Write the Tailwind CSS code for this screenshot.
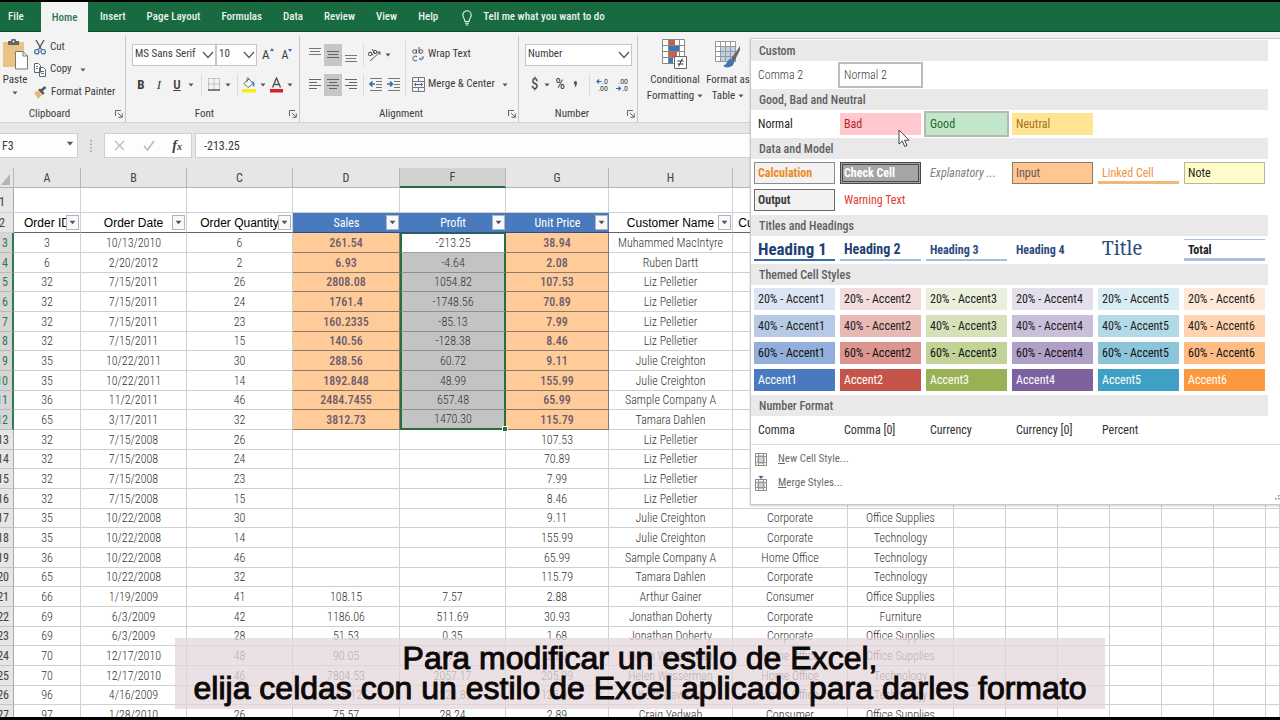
<!DOCTYPE html>
<html lang="en">
<head>
<meta charset="utf-8">
<meta name="viewport" content="width=device-width, initial-scale=1">
<title>Excel - Cell Styles</title>
<script src="https://cdn.jsdelivr.net/npm/@tailwindcss/browser@4"></script>
</head>
<body class="relative flex h-screen flex-col overflow-hidden border-t-2 border-b-3 border-black bg-white font-['Roboto_Condensed','Liberation_Sans',sans-serif] text-[11px] text-[#3b3b3b]">

<svg class="hidden" aria-hidden="true">
  <symbol id="caret" viewBox="0 0 6 4"><path d="M0.5 0.5h5L3 3.5z" fill="#555"/></symbol>
  <symbol id="chev" viewBox="0 0 12 8"><path d="M1 1l5 5.5L11 1" fill="none" stroke="#555" stroke-width="1.2"/></symbol>
  <symbol id="launch" viewBox="0 0 8 8"><path d="M.5 6V.5H6M3 3l4 4M7.3 3.5v3.8H3.5" fill="none" stroke="#666"/></symbol>
</svg>

<!-- Tabs -->
<nav class="flex h-[30px] shrink-0 items-stretch border-b border-[#0c4a27] bg-[#186a41] font-medium text-[#e8f3ec] [&>a]:pt-[2px]">
  <a href="#" class="flex w-[41px] items-center pl-2">File</a>
  <a href="#" class="-mb-px flex w-[47px] items-center justify-center bg-[#f3f3f3] font-medium text-[#2c7a51]">Home</a>
  <a href="#" class="ml-3 flex items-center">Insert</a>
  <a href="#" class="ml-[21px] flex items-center">Page Layout</a>
  <a href="#" class="ml-[21px] flex items-center">Formulas</a>
  <a href="#" class="ml-[21px] flex items-center">Data</a>
  <a href="#" class="ml-[21px] flex items-center">Review</a>
  <a href="#" class="ml-[21px] flex items-center">View</a>
  <a href="#" class="ml-[21px] flex items-center">Help</a>
  <a href="#" class="ml-6 flex items-center gap-[11px]">
    <svg width="10" height="16" viewBox="0 0 10 16" fill="none" stroke="#e8f3ec" stroke-width="1.1"><path d="M3 11.5C3 9 .8 8 .8 5a4.2 4.2 0 018.4 0C9.200 8 7 9 7 11.500zM3 13.300h4M3.700 15h2.600"/></svg>
    Tell me what you want to do</a>
</nav>

<!-- Ribbon -->
<section class="flex h-[91px] shrink-0 border-b border-[#d4d4d4] bg-[#f3f3f3] pt-1">
  <!-- Clipboard -->
  <div class="flex w-[126px] shrink-0 flex-col border-r border-[#c8c8c8]">
    <div class="flex grow">
      <button class="flex w-[34px] flex-col items-center pr-1 pt-[3px]">
        <svg width="25" height="31" viewBox="0 0 25 31"><path d="M0 3h21v25H0z" fill="#eac282"/><path d="M5 2h3a2.500 2.500 0 015 0h3v4H5z" fill="#636363"/><circle cx="10.500" cy="2.500" r="1" fill="#f3f3f3"/><path d="M12.500 12.500h7.500l4.500 4.500v13h-12z" fill="#fff" stroke="#777"/><path d="M20 12.500v4.500h4.500" fill="none" stroke="#777"/></svg>
        <span class="mt-[3px] leading-[14px]">Paste</span>
        <svg class="mt-1" width="6" height="4"><use href="#caret"/></svg>
      </button>
      <div class="flex flex-col">
        <button class="flex h-[22px] items-center gap-1"><svg width="12" height="15" viewBox="0 0 12 15" fill="none"><path d="M2 0l5.500 9.500M10 0L4.500 9.500" stroke="#555" stroke-width="1.300"/><circle cx="2.800" cy="11.700" r="2.200" stroke="#3d6ea8" stroke-width="1.200"/><circle cx="9.200" cy="11.700" r="2.200" stroke="#3d6ea8" stroke-width="1.200"/></svg>Cut</button>
        <button class="flex h-[23px] items-center gap-1"><svg width="12" height="14" viewBox="0 0 12 14" fill="#fff" stroke="#666"><path d="M.5.5h4l2 2v7h-6zM5.500 4.500h4l2 2v7h-6z"/><path d="M2 3.500h2M2 5.500h2M7 8.500h3M7 10.500h3" stroke="#4472a8"/></svg>Copy<svg class="ml-1" width="6" height="4"><use href="#caret"/></svg></button>
        <button class="flex h-[22px] items-center gap-1"><svg width="13" height="13" viewBox="0 0 13 13"><path d="M0 6l4 7 4-4-4-4z" fill="#e8b873"/><path d="M4 4l5 5 1.500-2L6 2.500z" fill="#555"/><path d="M7.500 4.500l4-3.500" stroke="#555" stroke-width="2.600"/></svg>Format Painter</button>
      </div>
    </div>
    <div class="flex h-4 items-center"><span class="grow pr-4 text-center">Clipboard</span><svg class="mr-[2px]" width="8" height="8"><use href="#launch"/></svg></div>
  </div>
  <!-- Font -->
  <div class="flex w-[174px] shrink-0 flex-col border-r border-[#c8c8c8] pl-[6px]">
    <div class="flex h-[37px] items-center">
      <label class="relative flex"><select aria-label="Font name" class="h-[22px] w-[84px] appearance-none border border-[#c6c6c6] bg-white pl-[2px] text-[11px]"><option>MS Sans Serif</option></select><svg class="pointer-events-none absolute right-[2px] top-[7px]" width="12" height="8"><use href="#chev"/></svg></label>
      <label class="relative flex"><select aria-label="Font size" class="h-[22px] w-[41px] appearance-none border border-[#c6c6c6] bg-white pl-[2px] text-[11px]"><option>10</option></select><svg class="pointer-events-none absolute right-[2px] top-[7px]" width="12" height="8"><use href="#chev"/></svg></label>
      <button aria-label="Increase font size" class="ml-[5px] flex items-start text-[13px] leading-none">A<svg width="4" height="4" viewBox="0 0 4 4"><path d="M0 3h4L2 0z" fill="#2f6db5"/></svg></button>
      <button aria-label="Decrease font size" class="ml-2 flex items-start text-[12px] leading-none">A<svg width="4" height="4" viewBox="0 0 4 4"><path d="M0 0h4L2 3z" fill="#2f6db5"/></svg></button>
    </div>
    <div class="flex h-[23px] items-center text-[13px]">
      <button class="w-[18px] font-bold">B</button>
      <button class="w-[18px] font-['Liberation_Serif',serif] italic">I</button>
      <button class="w-[18px] font-medium underline">U</button>
      <svg class="ml-[2px] mr-[7px]" width="6" height="4"><use href="#caret"/></svg>
      <span class="mr-[6px] h-[22px] w-px bg-[#dcdcdc]"></span>
      <svg width="12" height="13" viewBox="0 0 12 13" fill="none"><path d="M.5.5h11v11M.5.5v11M6 .5v11M.5 6h11" stroke="#999" stroke-dasharray="1 1"/><path d="M0 12h12" stroke="#555" stroke-width="1.500"/></svg>
      <svg class="ml-[5px] mr-[6px]" width="6" height="4"><use href="#caret"/></svg>
      <span class="mr-1 h-[22px] w-px bg-[#dcdcdc]"></span>
      <svg width="14" height="16" viewBox="0 0 14 16"><path d="M2 6.500L7 2l4 4.500-5 4z" fill="#fff" stroke="#666"/><path d="M5 5V1.500c0-1 2-1 2 0" fill="none" stroke="#666"/><path d="M10.500 4c2 1 2.500 3 1.500 6-1.500-1-1.500-3-1.500-6z" fill="#3c76b8"/><path d="M0 12h14v3.500H0z" fill="#f7ec22"/></svg>
      <svg class="ml-1 mr-1" width="6" height="4"><use href="#caret"/></svg>
      <svg width="13" height="16" viewBox="0 0 13 16"><path d="M2.500 10.500L6.500 1l4 9.500M4 7.500h5" fill="none" stroke="#555" stroke-width="1.400"/><path d="M0 12h13v3.500H0z" fill="#dc1f1f"/></svg>
      <svg class="ml-1" width="6" height="4"><use href="#caret"/></svg>
    </div>
    <div class="mt-auto flex h-4 items-center"><span class="grow text-center pr-3">Font</span><svg class="mr-[2px]" width="8" height="8"><use href="#launch"/></svg></div>
  </div>
  <!-- Alignment -->
  <div class="flex w-[219px] shrink-0 flex-col border-r border-[#c8c8c8] pl-[6px]">
    <div class="flex">
      <div class="flex flex-col">
        <div class="flex h-[37px] items-center">
          <button aria-label="Top align" class="flex h-[22px] w-[18px] items-center justify-center"><svg width="12" height="16" viewBox="0 0 12 16" stroke="#777"><path d="M0 1.500h12M1 4.500h10M0 7.500h12"/></svg></button>
          <button aria-label="Middle align" class="flex h-[22px] w-[18px] items-center justify-center bg-[#c6c6c6]"><svg width="12" height="16" viewBox="0 0 12 16" stroke="#666"><path d="M0 4.500h12M1 7.500h10M0 10.500h12"/></svg></button>
          <button aria-label="Bottom align" class="flex h-[22px] w-[18px] items-center justify-center"><svg width="12" height="16" viewBox="0 0 12 16" stroke="#777"><path d="M0 8.500h12M1 11.500h10M0 14.500h12"/></svg></button>
          <span class="mx-[3px] h-[22px] w-px bg-[#dcdcdc]"></span>
          <button aria-label="Orientation" class="flex items-center gap-1"><svg width="14" height="14" viewBox="0 0 14 14" fill="none" stroke="#555"><circle cx="3" cy="6" r="1.700"/><path d="M3.500 3.500l2.500 4M5 1l3.500 5"/><circle cx="8" cy="4" r="1.700"/><path d="M3 13L13 4M10 4h3v3"/></svg><svg width="6" height="4"><use href="#caret"/></svg></button>
        </div>
        <div class="flex h-[23px] items-center">
          <button aria-label="Align left" class="flex h-[22px] w-[18px] items-center justify-center"><svg width="12" height="12" viewBox="0 0 12 12" stroke="#666"><path d="M0 .5h12M0 3.500h8M0 6.500h12M0 9.500h8"/></svg></button>
          <button aria-label="Center" class="flex h-[22px] w-[18px] items-center justify-center bg-[#c6c6c6]"><svg width="12" height="12" viewBox="0 0 12 12" stroke="#666"><path d="M0 .5h12M2 3.500h8M0 6.500h12M2 9.500h8"/></svg></button>
          <button aria-label="Align right" class="flex h-[22px] w-[18px] items-center justify-center"><svg width="12" height="12" viewBox="0 0 12 12" stroke="#666"><path d="M0 .5h12M4 3.500h8M0 6.500h12M4 9.500h8"/></svg></button>
          <span class="mx-[3px] h-[22px] w-px bg-[#dcdcdc]"></span>
          <button aria-label="Decrease indent" class="ml-[2px]"><svg width="14" height="13" viewBox="0 0 14 13" fill="none"><path d="M1 .5h12M7 3.500h6M7 6.500h6M7 9.500h6M1 12.500h12" stroke="#777"/><path d="M6 6H1.500M3.500 3.500L1 6l2.500 2.500" stroke="#2f6db5" stroke-width="1.600"/></svg></button>
          <button aria-label="Increase indent" class="ml-1"><svg width="14" height="13" viewBox="0 0 14 13" fill="none"><path d="M1 .5h12M7 3.500h6M7 6.500h6M7 9.500h6M1 12.500h12" stroke="#777"/><path d="M0 6h5M3 3.500L5.500 6 3 8.500" stroke="#2f6db5" stroke-width="1.600"/></svg></button>
        </div>
      </div>
      <div class="ml-1 mt-[5px] flex h-[55px] flex-col justify-between border-l border-[#dcdcdc] pl-[6px]">
        <button class="flex h-[27px] items-center gap-1"><svg width="12" height="15" viewBox="0 0 12 15" fill="none" stroke="#555"><circle cx="2.500" cy="4.500" r="1.800"/><path d="M4.500 2.500v4M7 0v6.500"/><circle cx="9" cy="4.500" r="1.800"/><path d="M5 9.500c-3-1-4 0-4 2s1 3 4 2"/><path d="M11 9v3H7.500M9 10.500L7.500 12 9 13.500" stroke="#2f6db5"/></svg>Wrap Text</button>
        <button class="flex h-[23px] items-center gap-[3px]"><svg width="13" height="15" viewBox="0 0 13 15" fill="none" stroke="#777"><path d="M.5.5h12v14H.5zM.5 4.500h12M.5 10.500h12M6.500.5v4M6.500 10.500v4"/><path d="M2.500 7.500h8M4 6L2.500 7.500 4 9M9 6l1.500 1.500L9 9" stroke="#2f6db5"/></svg><span>Merge &amp; Center</span><svg class="ml-1" width="6" height="4"><use href="#caret"/></svg></button>
      </div>
    </div>
    <div class="mt-auto flex h-4 items-center"><span class="grow pr-3 text-center">Alignment</span><svg class="mr-[2px]" width="8" height="8"><use href="#launch"/></svg></div>
  </div>
  <!-- Number -->
  <div class="flex w-[119px] shrink-0 flex-col border-r border-[#c8c8c8] pl-[6px]">
    <div class="flex h-[37px] items-center">
      <label class="relative flex"><select aria-label="Number format" class="h-[22px] w-[107px] appearance-none border border-[#c6c6c6] bg-white pl-[2px] text-[11px]"><option>Number</option></select><svg class="pointer-events-none absolute right-[2px] top-[7px]" width="12" height="8"><use href="#chev"/></svg></label>
    </div>
    <div class="flex h-[23px] items-center text-[15px] leading-none">
      <button class="ml-[6px]">$</button>
      <svg class="ml-[6px] mr-[5px]" width="6" height="4"><use href="#caret"/></svg>
      <button>%</button>
      <button class="ml-2 w-2" aria-label="Comma style"><svg width="5" height="8" viewBox="0 0 5 8"><path d="M1 1.500a1.500 1.500 0 013 0c0 2.500-1 4-2.500 5.500 1-2 .5-3 0-3.500S1 2.500 1 1.500z" fill="#555"/></svg></button>
      <span class="ml-2 mr-[6px] h-[22px] w-px bg-[#dcdcdc]"></span>
      <button aria-label="Increase decimal" class="flex flex-col items-end text-[8px] leading-[7px]"><span class="flex items-center"><svg width="6" height="5" viewBox="0 0 6 5"><path d="M5.500 2.500H1M3 .5L1 2.500l2 2" fill="none" stroke="#2f6db5" stroke-width="1.200"/></svg>.0</span><span>.00</span></button>
      <button aria-label="Decrease decimal" class="ml-2 flex flex-col items-end text-[8px] leading-[7px]"><span>.00</span><span class="flex items-center"><svg width="6" height="5" viewBox="0 0 6 5"><path d="M0 2.500h4.500M2.500 .5l2 2-2 2" fill="none" stroke="#2f6db5" stroke-width="1.200"/></svg>.0</span></button>
    </div>
    <div class="mt-auto flex h-4 items-center"><span class="grow text-center pr-2">Number</span><svg class="mr-[2px]" width="8" height="8"><use href="#launch"/></svg></div>
  </div>
  <!-- Styles -->
  <div class="flex items-start pt-[3px]">
    <button class="flex w-[74px] flex-col items-center leading-4">
      <svg width="26" height="31" viewBox="0 0 26 31"><path d="M1 1h22v24H1z" fill="#fff"/><path d="M7 1h6v6H7zM7 13h8v6H7z" fill="#c9603f"/><path d="M7 7h10v6H7z" fill="#3f74b8"/><path d="M7 19h4v6H7z" fill="#3f74b8"/><path d="M.5.5h22v24H.5zM.5 6.500h22M.5 12.500h22M.5 18.500h22M6.500.5v24M17.500.5v24" fill="none" stroke="#888"/><path d="M12.500 17.500h12v12h-12z" fill="#fff" stroke="#666"/><path d="M15.500 22h6M15.500 25h6M20.500 19.500l-4 8" stroke="#333" fill="none"/></svg>
      <span class="mt-[2px]">Conditional</span><span class="flex items-center gap-[3px]">Formatting<svg width="6" height="4"><use href="#caret"/></svg></span>
    </button>
    <button class="flex w-8 flex-col items-center whitespace-nowrap leading-4">
      <svg width="26" height="31" viewBox="0 0 26 31"><path d="M1 3h20v20H1z" fill="#fff"/><path d="M6 8h15v15H6z" fill="#bdd1ea"/><path d="M.5 2.500h20v20H.5zM.5 7.500h20M.5 12.500h20M.5 17.500h20M5.500 2.500v20M10.500 2.500v20M15.500 2.500v20" fill="none" stroke="#999"/><path d="M25 7l-9 13 3 3 6-12z" fill="#666"/><path d="M16 20c-4 0-3 5-8 7 4 3 11 1 11-4z" fill="#3f74b8"/></svg>
      <span class="mt-[2px]">Format as</span><span class="flex items-center gap-[3px]">Table<svg width="6" height="4"><use href="#caret"/></svg></span>
    </button>
  </div>
</section>

<!-- Formula bar -->
<section class="flex h-[45px] shrink-0 items-center bg-[#e6e6e6] text-[12px]">
  <div class="flex h-[25px] w-[78px] items-center border border-l-0 border-[#d0d0d0] bg-[#fdfdfd]">
    <input aria-label="Name box" value="F3" class="w-[66px] bg-transparent pl-[2px] outline-none">
    <svg class="mb-1" width="8" height="5"><use href="#caret"/></svg>
  </div>
  <svg class="mx-[11px]" width="4" height="12" viewBox="0 0 4 12"><path d="M2 0v12" stroke="#999" stroke-width="1.500" stroke-dasharray="1.500 2"/></svg>
  <div class="flex h-[25px] w-[88px] items-center justify-between border border-[#d0d0d0] bg-[#fdfdfd] px-[9px]">
    <button aria-label="Cancel"><svg width="11" height="11" viewBox="0 0 11 11"><path d="M1 1l9 9M10 1l-9 9" stroke="#bbb" stroke-width="1.300"/></svg></button>
    <button aria-label="Enter"><svg width="12" height="11" viewBox="0 0 12 11"><path d="M1 6l3.500 4L11 1" fill="none" stroke="#bbb" stroke-width="1.600"/></svg></button>
    <button class="font-['Liberation_Serif',serif] text-[14px] font-bold italic leading-none" aria-label="Insert function">f<span class="text-[10px]">x</span></button>
  </div>
  <input aria-label="Formula" value="-213.25" class="ml-[3px] h-[25px] min-w-0 grow border border-[#d0d0d0] bg-[#fdfdfd] pl-2 outline-none">
</section>

<!-- Sheet -->
<main class="min-h-0 grow overflow-hidden">
  <table class="w-full table-fixed border-separate border-spacing-0 text-center text-[12px] leading-none">
    <colgroup>
      <col class="w-[14px]"><col class="w-[67px]"><col class="w-[106px]"><col class="w-[106px]"><col class="w-[107px]"><col class="w-[106px]"><col class="w-[103px]"><col class="w-[124px]"><col class="w-[115px]"><col class="w-[106px]"><col class="w-[52px]"><col class="w-[52px]"><col class="w-[52px]"><col class="w-[52px]"><col class="w-[52px]"><col class="w-[52px]"><col>
    </colgroup>
    <thead id="head"></thead>
    <tbody id="rows" class="font-light text-[#333] [&>tr]:h-5 [&>tr:nth-child(3n)]:h-[19px]"></tbody>
  </table>
</main>

<!-- Cell styles gallery -->
<aside class="absolute top-9 right-0 flex h-[467px] w-[530px] flex-col border border-r-0 border-[#c9c9c9] bg-white pt-px text-[12px] shadow-[0_1px_2px_rgba(0,0,0,0.2)]">
  <div id="gallery"></div>
  <div class="flex flex-col border-t border-[#dedede] pt-[2px] text-[11px] text-[#6b6b6b]">
    <button class="flex h-6 items-center gap-[11px] pl-1"><svg width="12" height="13" viewBox="0 0 12 13" fill="none" stroke="#888"><path d="M.5.5h11v12H.5z"/><path d="M3 3h6v7H3z" fill="#c9d2e6"/><path d="M.5 3.500h11M.5 9.500h11M3.500.5v12M8.500.5v12" stroke="#999"/></svg><span><u>N</u>ew Cell Style...</span></button>
    <button class="flex h-6 items-center gap-[11px] pl-1"><svg width="12" height="15" viewBox="0 0 12 15" fill="none" stroke="#888"><path d="M.5 3.500h11v11H.5z"/><path d="M3 6h6v6H3z" fill="#c9d2e6"/><path d="M.5 6.500h11M.5 11.500h11M3.500 3.500v11M8.500 3.500v11" stroke="#999"/><path d="M3.500 0h5L6 3z" fill="#3a5f95" stroke="none"/></svg><span><u>M</u>erge Styles...</span></button>
  </div>
  <svg class="mt-auto ml-auto mb-1" width="5" height="5" viewBox="0 0 5 5" fill="#888"><path d="M3 0h1.500v1.500H3zM0 3h1.500v1.500H0zM3 3h1.500v1.500H3z"/></svg>
</aside>

<!-- Mouse pointer -->
<svg class="absolute top-[127px] left-[898px]" width="12" height="19" viewBox="0 0 12 19"><path d="M1 1v14l3.300-3 2.400 5.500 2.300-1-2.400-5.300H11z" fill="#fff" stroke="#444"/></svg>

<!-- Subtitle -->
<div class="absolute bottom-2 left-1/2 w-[930px] -translate-x-1/2 bg-[#e4d6d9]/75 pt-[5px] pb-[6px] text-center font-['Liberation_Sans',sans-serif] text-[32px] leading-[30px] whitespace-nowrap text-[#0c0808] [-webkit-text-stroke:1px_#0c0808]">
  <p>Para modificar un estilo de Excel,</p>
  <p>elija celdas con un estilo de Excel aplicado para darles formato</p>
</div>

<script>
const filterBtn = '<button aria-label="Filter" class="absolute right-px bottom-[2px] flex h-[15px] w-[13px] items-center justify-center border border-[#aeb4c0] bg-[#f6f8fc]"><svg width="7" height="5"><use href="#caret"/></svg></button>';
const letters = ['A', 'B', 'C', 'D', 'F', 'G', 'H', 'I', 'J', '', '', '', '', '', '', ''];
const titles = ['Order ID', 'Order Date', 'Order Quantity', 'Sales', 'Profit', 'Unit Price', 'Customer Name', 'Customer Segment', 'Product Category', '', '', '', '', '', '', ''];

let head = '<tr class="h-5 bg-[#e6e6e6] text-[#444]"><th class="border-r border-b border-[#b5b5b5] p-0"><svg class="ml-px mt-1" width="9" height="11" viewBox="0 0 9 11"><path d="M9 0v11H0z" fill="#b4b4b4"/></svg></th>';
letters.forEach((l, i) => {
  head += i === 4
    ? '<th class="border-r border-r-[#b5b5b5] border-b-2 border-b-[#2a6b3f] bg-[#d2d2d2] p-0 font-normal">' + l + '</th>'
    : '<th class="border-r border-b border-[#b5b5b5] p-0 font-normal">' + l + '</th>';
});
head += '</tr><tr class="h-[25px]"><th class="border-r border-b border-r-[#a8a8a8] border-b-[#d0d0d0] bg-[#e6e6e6] p-0 align-bottom font-normal"><div class="flex justify-end pr-[8px] pb-1">1</div></th>';
for (let i = 0; i < 16; i++) head += '<td class="border-r border-b border-[#d0d0d0] p-0"></td>';
head += '</tr><tr class="h-5 text-black"><th class="border-r border-b border-r-[#a8a8a8] border-b-[#d0d0d0] bg-[#e6e6e6] p-0 font-normal text-[#444]"><div class="flex justify-end pr-[8px]">2</div></th>';
titles.forEach((t, i) => {
  if (!t) { head += '<td class="border-r border-b border-[#d0d0d0] p-0"></td>'; return; }
  head += (i > 2 && i < 6)
    ? '<th class="relative overflow-hidden border-b border-[#2c4f86] bg-[#487abd] p-0 text-[12px] font-normal whitespace-nowrap text-white">' + t + filterBtn + '</th>'
    : '<th class="relative overflow-hidden border-r border-b border-r-[#d0d0d0] border-b-[#666] p-0 font-[\'Liberation_Sans\',sans-serif] text-[12px] font-normal whitespace-nowrap">' + t + filterBtn + '</th>';
});
head += '</tr>';
document.getElementById('head').innerHTML = head;

const data = `3|10/13/2010|6|261.54|-213.25|38.94|Muhammed MacIntyre||
6|2/20/2012|2|6.93|-4.64|2.08|Ruben Dartt||
32|7/15/2011|26|2808.08|1054.82|107.53|Liz Pelletier||
32|7/15/2011|24|1761.4|-1748.56|70.89|Liz Pelletier||
32|7/15/2011|23|160.2335|-85.13|7.99|Liz Pelletier||
32|7/15/2011|15|140.56|-128.38|8.46|Liz Pelletier||
35|10/22/2011|30|288.56|60.72|9.11|Julie Creighton||
35|10/22/2011|14|1892.848|48.99|155.99|Julie Creighton||
36|11/2/2011|46|2484.7455|657.48|65.99|Sample Company A||
65|3/17/2011|32|3812.73|1470.30|115.79|Tamara Dahlen||
32|7/15/2008|26|||107.53|Liz Pelletier||
32|7/15/2008|24|||70.89|Liz Pelletier||
32|7/15/2008|23|||7.99|Liz Pelletier||
32|7/15/2008|15|||8.46|Liz Pelletier||
35|10/22/2008|30|||9.11|Julie Creighton|Corporate|Office Supplies
35|10/22/2008|14|||155.99|Julie Creighton|Corporate|Technology
36|10/22/2008|46|||65.99|Sample Company A|Home Office|Technology
65|10/22/2008|32|||115.79|Tamara Dahlen|Corporate|Technology
66|1/19/2009|41|108.15|7.57|2.88|Arthur Gainer|Consumer|Office Supplies
69|6/3/2009|42|1186.06|511.69|30.93|Jonathan Doherty|Corporate|Furniture
69|6/3/2009|28|51.53|0.35|1.68|Jonathan Doherty|Corporate|Office Supplies
70|12/17/2010|48|90.05|107.00|2.89|Helen Wasserman|Home Office|Office Supplies
70|12/17/2010|46|7804.53|2057.17|205.99|Helen Wasserman|Home Office|Technology
96|4/16/2009|32|4158.125|1228.89|125.99|Keith Dawkins|Home Office|Technology
97|1/28/2010|26|75.57|28.24|2.89|Craig Yedwab|Consumer|Office Supplies`.split('\n').map(r => r.split('|'));

let rows = '';
data.forEach((r, n) => {
  const sel = n < 10;
  rows += '<tr>' + (sel
    ? '<th class="border-r-2 border-b border-r-[#2f7a50] border-b-[#b8b8b8] bg-[#d6d6d6] p-0 font-normal text-[#2f7a50]">'
    : '<th class="border-r border-b border-r-[#a8a8a8] border-b-[#c4c4c4] bg-[#e6e6e6] p-0 font-normal text-[#444]">')
    + '<div class="flex justify-end pr-1">' + (n + 3) + '</div></th>';
  for (let i = 0; i < 16; i++) {
    const v = r[i] || '';
    if (sel && (i === 3 || i === 5)) {
      rows += '<td class="border-r border-b border-[#8b7a69] bg-[#ffcb99] p-0 font-medium text-[#6b5c6e]">' + v + '</td>';
    } else if (i === 4 && n === 0) {
      rows += '<td class="border-x-2 border-y border-x-[#2a6b3f] border-t-[#2a6b3f] border-b-[#a0a0a0] bg-white p-0">' + v + '</td>';
    } else if (i === 4 && n < 9) {
      rows += '<td class="border-x-2 border-b border-x-[#2a6b3f] border-b-[#8f8f8f] bg-[#c3c3c3] p-0">' + v + '</td>';
    } else if (i === 4 && n === 9) {
      rows += '<td class="relative border-x-2 border-b-2 border-[#2a6b3f] bg-[#c3c3c3] p-0">' + v + '<span class="absolute -right-1 -bottom-1 z-10 size-[6px] border border-white bg-[#2a6b3f]"></span></td>';
    } else {
      rows += '<td class="border-r border-b border-[#d0d0d0] p-0 whitespace-nowrap">' + v + '</td>';
    }
  }
  rows += '</tr>';
});
document.getElementById('rows').innerHTML = rows;

const gallery = [
  ['Custom', [['Comma 2', 'font-light'], ['Normal 2', 'outline-2 outline-[#bdbdbd] font-light']]],
  ['Good, Bad and Neutral', [['Normal', 'text-[#222]'], ['Bad', 'bg-[#ffc7ce] text-[#b3262f]'], ['Good', 'bg-[#c1e6ca] text-[#1c6b2c] outline-2 outline-[#b5b9b5]'], ['Neutral', 'bg-[#ffe494] text-[#a8711c]']]],
  ['Data and Model', [
    ['Calculation', 'outline -outline-offset-1 outline-[#8c8c8c] bg-[#f2f2f2] font-bold text-[#ee8a1d]'],
    ['Check Cell', 'outline-3 outline-double -outline-offset-3 outline-[#4a4a4a] bg-[#a5a5a5] font-bold text-white'],
    ['Explanatory ...', 'italic text-[#808080]'],
    ['Input', 'outline -outline-offset-1 outline-[#8a7a70] bg-[#ffc78f] text-[#6b5560]'],
    ['Linked Cell', 'border-b-3 border-[#eeb878] pt-[2px] text-[#ee9440]'],
    ['Note', 'outline -outline-offset-1 outline-[#b5b5a0] bg-[#fffcc9] text-[#222]'],
    ['Output', 'outline -outline-offset-1 outline-[#6c6c6c] bg-[#f2f2f2] font-bold text-[#3f3f3f]'],
    ['Warning Text', 'text-[#e03a2c]']]],
  ['Titles and Headings', [
    ['Heading 1', 'border-b-2 border-[#3a69b0] text-[17px] font-bold text-[#1f3f77]'],
    ['Heading 2', 'border-b-2 border-[#a6bce0] text-[14px] font-bold text-[#1f3f77]'],
    ['Heading 3', 'border-b-2 border-[#a6bce0] pt-[2px] font-bold text-[#2c4b80]'],
    ['Heading 4', 'font-bold text-[#2c4b80]'],
    ['Title', "font-['Noto_Serif','Liberation_Serif',serif] pb-1 text-[19px] text-[#2c4b80]"],
    ['Total', 'border-t border-b-3 border-[#a9bfe0] pt-[2px] font-bold text-[#222]']]],
  ['Themed Cell Styles', [
    ['20% - Accent1', 'bg-[#dbe5f3] text-[#222]'], ['20% - Accent2', 'bg-[#f3dcdb] text-[#222]'], ['20% - Accent3', 'bg-[#eaf0dc] text-[#222]'], ['20% - Accent4', 'bg-[#e4dfec] text-[#222]'], ['20% - Accent5', 'bg-[#d9ecf3] text-[#222]'], ['20% - Accent6', 'bg-[#fee8d8] text-[#222]'],
    ['40% - Accent1', 'bg-[#b6cae6] text-[#222]'], ['40% - Accent2', 'bg-[#e8b8b5] text-[#222]'], ['40% - Accent3', 'bg-[#d6e1ba] text-[#222]'], ['40% - Accent4', 'bg-[#cabfd9] text-[#222]'], ['40% - Accent5', 'bg-[#b3d9e7] text-[#222]'], ['40% - Accent6', 'bg-[#fed3ae] text-[#222]'],
    ['60% - Accent1', 'bg-[#91afda] text-[#111]'], ['60% - Accent2', 'bg-[#dd9590] text-[#111]'], ['60% - Accent3', 'bg-[#c2d397] text-[#111]'], ['60% - Accent4', 'bg-[#b09fc7] text-[#111]'], ['60% - Accent5', 'bg-[#8cc5da] text-[#111]'], ['60% - Accent6', 'bg-[#febc84] text-[#111]'],
    ['Accent1', 'bg-[#487abd] text-white'], ['Accent2', 'bg-[#c5554a] text-white'], ['Accent3', 'bg-[#99b154] text-white'], ['Accent4', 'bg-[#7e629f] text-white'], ['Accent5', 'bg-[#3f9fc5] text-white'], ['Accent6', 'bg-[#fc983e] text-white']]],
  ['Number Format', [['Comma', 'text-[#333]'], ['Comma [0]', 'text-[#333]'], ['Currency', 'text-[#333]'], ['Currency [0]', 'text-[#333]'], ['Percent', 'text-[#333]']]]
];
document.getElementById('gallery').innerHTML = gallery.map(([title, items]) =>
  '<section><h2 class="mr-3 flex h-[21px] items-center bg-[#e9e9e9] pl-2 font-medium text-[#606060]">' + title + '</h2>'
  + '<div class="grid grid-cols-[repeat(6,81px)] gap-[5px] pl-[3px] ' + (items.length > 6 ? 'pt-[3px] pb-1' : 'py-[3px]') + '">'
  + items.map(([name, cls]) => '<button class="flex h-[22px] items-center px-1 text-left leading-none whitespace-nowrap ' + cls + '">' + name + '</button>').join('')
  + '</div></section>').join('');
</script>
</body>
</html>
